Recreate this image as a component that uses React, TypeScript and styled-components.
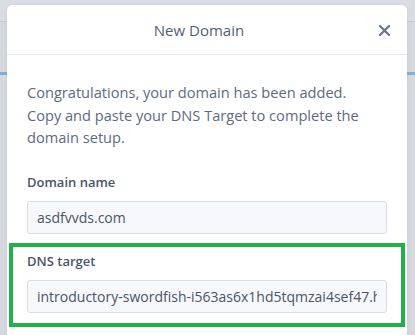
import React from "react"
import styled, { createGlobalStyle } from "styled-components"

const GlobalStyle = createGlobalStyle`
  html, body {
    margin: 0;
    padding: 0;
    width: 100%;
    height: 100%;
    overflow: hidden;
  }
  body {
    font-family: "Open Sans", "Liberation Sans", sans-serif;
    background: #d5d8df;
  }
`

const Page = styled.div`
  position: relative;
  width: 415px;
  height: 335px;
  background: #d5d8df;
  overflow: hidden;
`

const TopBar = styled.div`
  height: 21px;
  border-bottom: 1px solid #c6cad2;
  background: #d9dce3;
`

const AccentBar = styled.div`
  margin-top: 50px;
  height: 3px;
  background: #7fb0d3;
`

const Modal = styled.div`
  position: absolute;
  left: 7px;
  top: 5px;
  width: 400px;
  height: 360px;
  background: #ffffff;
  border-radius: 5px;
  box-shadow: 0 0 2px rgba(60, 70, 90, 0.15);
`

const Header = styled.div`
  position: relative;
  height: 50px;
  box-sizing: border-box;
  padding-right: 16px;
  display: flex;
  align-items: center;
  justify-content: center;
  border-bottom: 1px solid #e6e9ee;
`

const Title = styled.h2`
  margin: 0;
  font-size: 15px;
  font-weight: 400;
  color: #545f75;
`

const CloseButton = styled.button`
  position: absolute;
  right: 16px;
  top: 18px;
  width: 14px;
  height: 14px;
  padding: 0;
  border: 0;
  background: transparent;
  display: flex;
  align-items: center;
  justify-content: center;
  cursor: pointer;
`

const Body = styled.div`
  padding: 26px 20px 0;
`

const Intro = styled.p`
  margin: 0 0 24px;
  font-size: 14.6px;
  line-height: 22.5px;
  color: #5d6a82;
`

const Field = styled.div<{ $highlight?: boolean }>`
  display: flex;
  flex-direction: column;
  ${({ $highlight }) =>
    $highlight
      ? `
    margin: 9px -18px 0;
    padding: 5px 14px 10px;
    border: 4px solid #22b04a;
  `
      : ""}
`

const Label = styled.label`
  font-size: 13px;
  font-weight: 600;
  color: #49546a;
  margin-bottom: 10px;
`

const Input = styled.input`
  box-sizing: border-box;
  width: 100%;
  height: 33px;
  padding: 0 9px;
  border: 1px solid #d8dde6;
  border-radius: 3px;
  background: #f6f8fb;
  font-family: "Open Sans", "Liberation Sans", sans-serif;
  font-size: 14px;
  color: #4a5468;
  outline: none;
`

export default function App() {
  return (
    <>
      <GlobalStyle />
      <Page>
        <TopBar />
        <AccentBar />
        <Modal>
          <Header>
            <Title>New Domain</Title>
            <CloseButton aria-label="Close">
              <svg width="11" height="11" viewBox="0 0 11 11">
                <path
                  d="M1 1 L10 10 M10 1 L1 10"
                  stroke="#67758f"
                  strokeWidth="2.2"
                  strokeLinecap="round"
                />
              </svg>
            </CloseButton>
          </Header>
          <Body>
            <Intro>
              Congratulations, your domain has been added.
              <br />
              Copy and paste your DNS Target to complete the
              <br />
              domain setup.
            </Intro>
            <Field>
              <Label>Domain name</Label>
              <Input readOnly value="asdfvvds.com" />
            </Field>
            <Field $highlight>
              <Label>DNS target</Label>
              <Input
                readOnly
                value="introductory-swordfish-i563as6x1hd5tqmzai4sef47.herokudns.com"
              />
            </Field>
          </Body>
        </Modal>
      </Page>
    </>
  )
}
